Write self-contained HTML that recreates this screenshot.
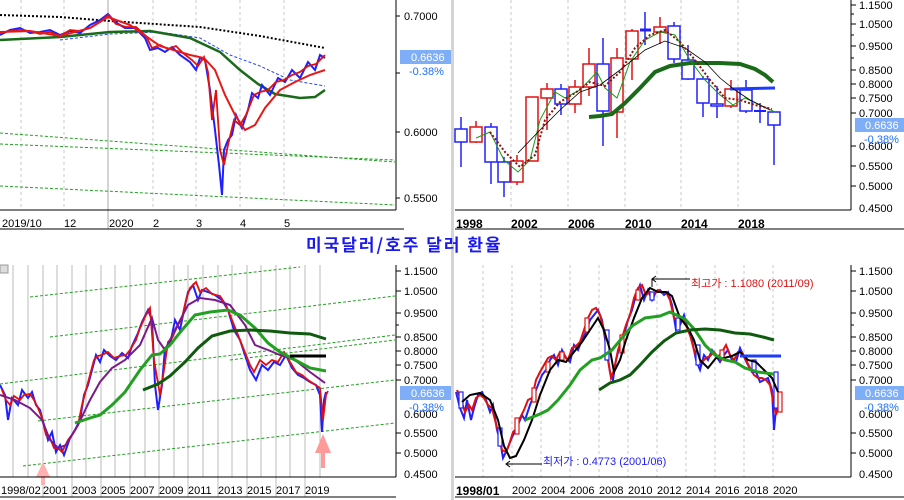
<!DOCTYPE html>
<html><head><meta charset="utf-8"><style>
html,body{margin:0;padding:0;background:#fff;}
svg{display:block;font-family:"Liberation Sans","Noto Sans CJK KR",sans-serif;}
.ax{font-size:11px;fill:#000;}
.xl{font-size:11px;fill:#000;}
.b{font-weight:bold;font-size:12px;}
</style></head><body>
<svg width="904" height="500" viewBox="0 0 904 500" xmlns="http://www.w3.org/2000/svg">
<rect width="904" height="500" fill="#fff"/>
<rect x="451" y="0" width="3" height="500" fill="#d4d4d4"/>

<!-- ===== TOP LEFT ===== -->
<g stroke="#c8c8c8" stroke-dasharray="3,3">
<line x1="21" y1="0" x2="21" y2="210"/><line x1="64" y1="0" x2="64" y2="210"/>
<line x1="153" y1="0" x2="153" y2="210"/><line x1="196" y1="0" x2="196" y2="210"/>
<line x1="240" y1="0" x2="240" y2="210"/><line x1="284" y1="0" x2="284" y2="210"/>
</g>
<line x1="108" y1="0" x2="108" y2="229" stroke="#aaa"/>
<g stroke="#22a022" stroke-dasharray="3,2" fill="none">
<line x1="0" y1="133" x2="395" y2="162"/><line x1="0" y1="144" x2="395" y2="160"/><line x1="0" y1="186" x2="395" y2="205"/>
</g>
<polyline fill="none" stroke="#000" stroke-width="2" stroke-dasharray="2,2" points="0,15 60,17 110,21 200,27 260,36 325,48"/>
<polyline fill="none" stroke="#2244ff" stroke-width="1" stroke-dasharray="3,2" points="60,40 110,34 160,32 200,38 230,55 260,66 290,80 325,86"/>
<polyline fill="none" stroke="#1a6a1a" stroke-width="2.5" points="0,40 60,37 110,32 150,31 190,38 220,52 240,70 258,84 275,94 300,98 315,97 325,90"/>
<polyline fill="none" stroke="#2020ff" stroke-width="2" points="0,35 10,30 20,28 30,33 40,32 50,30 60,35 70,31 80,33 90,25 100,20 108,14 115,22 125,28 135,28 145,38 150,50 158,48 165,52 172,47 180,55 190,62 196,70 200,58 205,60 210,90 215,130 219,165 222,195 224,150 228,140 232,135 236,115 242,128 248,110 252,93 258,98 262,85 270,95 278,78 285,82 292,70 300,78 308,62 315,70 320,55 325,58"/>
<polyline fill="none" stroke="#e01010" stroke-width="1.8" points="0,33 10,31 20,30 30,31 40,34 50,32 60,36 70,30 80,31 90,28 100,22 108,15 116,24 126,27 136,27 146,36 152,48 160,45 168,49 176,46 184,54 192,60 198,66 204,57 208,72 212,120 216,90 220,150 224,165 228,145 234,120 240,125 246,115 254,95 260,92 268,90 276,82 284,80 292,75 300,72 308,66 316,64 325,55"/>
<polyline fill="none" stroke="#e81818" stroke-width="2" points="0,32 30,31 60,36 90,28 108,17 130,25 160,46 190,55 204,58 215,70 225,95 235,115 245,130 255,125 265,108 280,90 295,82 310,75 325,70"/>
<line x1="396" y1="0" x2="396" y2="210" stroke="#000"/>
<line x1="0" y1="210" x2="396" y2="210" stroke="#000"/>
<line x1="0" y1="229" x2="404" y2="229" stroke="#000"/>
<g stroke="#000"><line x1="396" y1="16" x2="400" y2="16"/><line x1="396" y1="73" x2="400" y2="73"/><line x1="396" y1="132" x2="400" y2="132"/><line x1="396" y1="198" x2="400" y2="198"/></g>
<text class="ax" x="404" y="20">0.7000</text>
<text class="ax" x="404" y="136">0.6000</text>
<text class="ax" x="404" y="202">0.5500</text>
<rect x="400" y="50" width="51" height="14" fill="#7eaef8"/>
<text x="411" y="61" font-size="11" fill="#fff">0.6636</text>
<text x="409" y="75" font-size="11" fill="#1f6fff">-0.38%</text>
<text class="xl" x="2" y="227">2019/10</text>
<text class="xl" x="64" y="227">12</text>
<text class="xl" x="109" y="227">2020</text>
<text class="xl" x="153" y="227">2</text>
<text class="xl" x="196" y="227">3</text>
<text class="xl" x="240" y="227">4</text>
<text class="xl" x="284" y="227">5</text>

<!-- ===== TOP RIGHT ===== -->
<g stroke="#c8c8c8" stroke-dasharray="3,3">
<line x1="511" y1="0" x2="511" y2="210"/><line x1="568" y1="0" x2="568" y2="210"/>
<line x1="625" y1="0" x2="625" y2="210"/><line x1="681" y1="0" x2="681" y2="210"/><line x1="738" y1="0" x2="738" y2="210"/>
</g>
<g stroke-width="1.5" fill="none">
<g stroke="#2020ff"><line x1="461" y1="117" x2="461" y2="167"/><rect x="455" y="129" width="12" height="13" fill="#fff"/></g>
<g stroke="#e01010"><line x1="476" y1="121" x2="476" y2="143"/><rect x="470" y="127" width="12" height="15" fill="#fff"/></g>
<g stroke="#2020ff"><line x1="491" y1="123" x2="491" y2="184"/><rect x="485" y="127" width="12" height="35" fill="#fff"/></g>
<g stroke="#2020ff"><line x1="504" y1="157" x2="504" y2="197"/><rect x="498" y="162" width="12" height="20" fill="#fff"/></g>
<g stroke="#e01010"><line x1="517" y1="155" x2="517" y2="185"/><rect x="511" y="161" width="12" height="21" fill="#fff"/></g>
<g stroke="#e01010"><rect x="526" y="97" width="12" height="64" fill="#fff"/></g>
<g stroke="#e01010"><line x1="547" y1="83" x2="547" y2="130"/><rect x="541" y="89" width="12" height="9" fill="#fff"/></g>
<g stroke="#2020ff"><line x1="561" y1="84" x2="561" y2="115"/><rect x="555" y="89" width="12" height="15" fill="#fff"/></g>
<g stroke="#e01010"><line x1="575" y1="80" x2="575" y2="113"/><rect x="569" y="87" width="12" height="17" fill="#fff"/></g>
<g stroke="#e01010"><line x1="589" y1="48" x2="589" y2="96"/><rect x="583" y="64" width="12" height="23" fill="#fff"/></g>
<g stroke="#2020ff"><line x1="603" y1="38" x2="603" y2="146"/><rect x="597" y="64" width="12" height="47" fill="#fff"/></g>
<g stroke="#e01010"><line x1="617" y1="48" x2="617" y2="138"/><rect x="611" y="58" width="12" height="54" fill="#fff"/></g>
<g stroke="#e01010"><line x1="632" y1="29" x2="632" y2="80"/><rect x="626" y="31" width="12" height="28" fill="#fff"/></g>
<g stroke="#2020ff"><line x1="645" y1="12" x2="645" y2="45"/><line x1="640" y1="30" x2="651" y2="30" stroke-width="3"/></g>
<g stroke="#e01010"><line x1="660" y1="17" x2="660" y2="44"/><rect x="654" y="27" width="12" height="5" fill="#fff"/></g>
<g stroke="#2020ff"><line x1="674" y1="22" x2="674" y2="63"/><rect x="668" y="26" width="12" height="33" fill="#fff"/></g>
<g stroke="#2020ff"><line x1="688" y1="45" x2="688" y2="80"/><rect x="682" y="60" width="12" height="19" fill="#fff"/></g>
<g stroke="#2020ff"><line x1="703" y1="76" x2="703" y2="117"/><rect x="697" y="79" width="12" height="24" fill="#fff"/></g>
<g stroke="#2020ff"><line x1="717" y1="86" x2="717" y2="118"/><rect x="711" y="104" width="12" height="2" fill="#fff"/></g>
<g stroke="#e01010"><line x1="731" y1="80" x2="731" y2="108"/><rect x="725" y="89" width="12" height="17" fill="#fff"/></g>
<g stroke="#2020ff"><line x1="746" y1="80" x2="746" y2="113"/><rect x="740" y="90" width="12" height="21" fill="#fff"/></g>
<g stroke="#2020ff"><line x1="760" y1="103" x2="760" y2="123"/><line x1="754" y1="111" x2="766" y2="111" stroke-width="2"/></g>
<g stroke="#2020ff"><line x1="774" y1="112" x2="774" y2="165"/><rect x="768" y="112" width="12" height="13" fill="#fff"/></g>
</g>
<polyline fill="none" stroke="#1a6a1a" stroke-width="4" points="589,117 600,116 612,114 625,103 640,88 655,72 670,66 690,63 720,63 740,64 755,69 765,75 773,82"/>
<line x1="730" y1="89" x2="775" y2="88" stroke="#1e3cff" stroke-width="3"/>
<polyline fill="none" stroke="#1a9a1a" stroke-width="1" points="476,138 490,132 504,160 518,172 530,160 540,120 555,92 565,98 580,90 597,72 605,88 617,98 630,62 645,40 660,32 675,35 690,60 705,80 720,95 733,105 745,98 760,105 775,112"/>
<polyline fill="none" stroke="#000" stroke-width="0.8" points="518,153 540,130 560,110 580,92 600,85 620,70 645,50 665,41 685,48 705,62 720,78 735,90 750,100 770,110"/>
<polyline fill="none" stroke="#8a1010" stroke-width="2" stroke-dasharray="2,2" points="490,132 505,152 520,167 535,155 545,120 560,102 575,93 590,82 605,86 620,72 635,48 650,35 665,30 680,42 695,60 710,80 725,98 740,100 755,105 772,109"/>
<line x1="851" y1="0" x2="851" y2="210" stroke="#000"/>
<line x1="455" y1="210" x2="851" y2="210" stroke="#000"/>
<line x1="455" y1="229" x2="904" y2="229" stroke="#000"/>
<g stroke="#000">
<line x1="851" y1="5" x2="856" y2="5"/><line x1="851" y1="14" x2="854" y2="14"/><line x1="851" y1="24" x2="856" y2="24"/><line x1="851" y1="35" x2="854" y2="35"/><line x1="851" y1="46" x2="856" y2="46"/><line x1="851" y1="58" x2="854" y2="58"/><line x1="851" y1="70" x2="856" y2="70"/><line x1="851" y1="84" x2="856" y2="84"/><line x1="851" y1="98" x2="856" y2="98"/><line x1="851" y1="113" x2="856" y2="113"/><line x1="851" y1="146" x2="856" y2="146"/><line x1="851" y1="166" x2="856" y2="166"/><line x1="851" y1="186" x2="856" y2="186"/>
</g>
<text class="ax" x="859" y="9">1.1500</text>
<text class="ax" x="859" y="28">1.0500</text>
<text class="ax" x="859" y="50">0.9500</text>
<text class="ax" x="859" y="74">0.8500</text>
<text class="ax" x="859" y="88">0.8000</text>
<text class="ax" x="859" y="102">0.7500</text>
<text class="ax" x="859" y="117">0.7000</text>
<text class="ax" x="859" y="150">0.6000</text>
<text class="ax" x="859" y="170">0.5500</text>
<text class="ax" x="859" y="190">0.5000</text>
<text class="ax" x="859" y="212">0.4500</text>
<rect x="855" y="118" width="49" height="14" fill="#7eaef8"/>
<text x="865" y="129" font-size="11" fill="#fff">0.6636</text>
<text x="864" y="143" font-size="11" fill="#1f6fff">-0.38%</text>
<text class="xl b" x="456" y="228">1998</text>
<text class="xl b" x="511" y="228">2002</text>
<text class="xl b" x="568" y="228">2006</text>
<text class="xl b" x="625" y="228">2010</text>
<text class="xl b" x="681" y="228">2014</text>
<text class="xl b" x="738" y="228">2018</text>

<!-- Title -->
<text x="306" y="251" font-size="17" font-weight="bold" fill="#1a1aee" letter-spacing="2" font-family="'Noto Sans CJK KR','NanumGothic',sans-serif">미국달러/호주 달러 환율</text>

<!-- ===== BOTTOM LEFT ===== -->
<rect x="0" y="265" width="8" height="8" fill="#ddd" stroke="#999"/>
<g stroke="#bbb">
<line x1="13" y1="265" x2="13" y2="477"/><line x1="28" y1="265" x2="28" y2="477"/><line x1="43" y1="265" x2="43" y2="497"/><line x1="57" y1="265" x2="57" y2="477"/><line x1="72" y1="265" x2="72" y2="497"/><line x1="86" y1="265" x2="86" y2="477"/><line x1="101" y1="265" x2="101" y2="497"/><line x1="115" y1="265" x2="115" y2="477"/><line x1="130" y1="265" x2="130" y2="497"/><line x1="145" y1="265" x2="145" y2="477"/><line x1="159" y1="265" x2="159" y2="497"/><line x1="174" y1="265" x2="174" y2="477"/><line x1="188" y1="265" x2="188" y2="497"/><line x1="203" y1="265" x2="203" y2="477"/><line x1="218" y1="265" x2="218" y2="497"/><line x1="232" y1="265" x2="232" y2="477"/><line x1="247" y1="265" x2="247" y2="497"/><line x1="261" y1="265" x2="261" y2="477"/><line x1="276" y1="265" x2="276" y2="497"/><line x1="290" y1="265" x2="290" y2="477"/><line x1="305" y1="265" x2="305" y2="497"/><line x1="320" y1="265" x2="320" y2="477"/>
</g>
<g stroke="#22a022" stroke-dasharray="3,2" fill="none">
<line x1="30" y1="297" x2="300" y2="267"/>
<line x1="50" y1="337" x2="395" y2="296"/>
<line x1="0" y1="384" x2="395" y2="335"/>
<line x1="38" y1="421" x2="395" y2="380"/>
<line x1="23" y1="466" x2="395" y2="423"/>
<line x1="230" y1="360" x2="395" y2="340"/>
</g>
<polyline fill="none" stroke="#2020ff" stroke-width="2" points="0,385 5,395 8,420 12,398 18,405 22,390 28,398 32,392 36,405 40,410 44,425 48,440 52,432 56,452 60,445 64,455 70,438 75,430 80,420 84,395 88,385 92,370 96,355 100,362 104,350 110,356 116,360 122,353 128,358 132,346 138,333 142,322 148,310 152,320 155,385 158,410 162,385 165,348 170,345 175,320 180,330 184,310 188,292 193,285 198,300 202,290 208,292 215,295 222,300 228,310 234,330 240,340 246,358 250,370 256,380 262,365 268,370 274,362 280,365 286,355 292,368 298,375 304,378 310,382 316,385 320,395 322,432 324,400 326,392"/>
<polyline fill="none" stroke="#e01010" stroke-width="1.8" points="2,390 6,400 10,405 14,396 20,400 24,395 30,394 34,400 38,408 42,418 46,435 50,438 54,448 58,448 62,452 68,440 74,432 78,425 82,405 86,390 90,375 94,360 98,356 102,355 108,352 114,358 120,356 126,355 130,350 136,340 140,328 146,315 150,308 154,360 160,395 164,370 168,342 172,338 178,325 182,318 186,300 190,288 196,282 200,292 206,288 212,294 220,296 226,305 232,320 238,335 244,350 250,365 254,372 260,360 266,365 272,360 278,362 284,352 290,362 296,372 302,375 308,380 314,384 320,388 323,420 326,395 328,391"/>
<polyline fill="none" stroke="#7a1a8a" stroke-width="2" points="0,395 15,400 30,408 42,420 50,440 58,448 66,445 78,425 90,400 100,382 112,368 125,360 140,345 152,318 158,340 165,350 175,330 188,305 200,298 215,300 230,305 245,325 255,345 268,350 280,355 295,360 310,372 325,383"/>
<polyline fill="none" stroke="#22a022" stroke-width="3" points="75,423 90,418 100,415 112,405 125,392 140,370 152,355 160,354 170,345 182,330 195,315 210,312 228,310 240,315 255,328 268,343 280,352 295,360 310,368 326,371"/>
<polyline fill="none" stroke="#0e5a0e" stroke-width="3" points="143,390 158,384 170,376 185,362 198,348 212,336 230,331 250,330 270,331 290,333 310,334 326,339"/>
<line x1="290" y1="356" x2="326" y2="356" stroke="#000" stroke-width="3"/>
<polygon points="43,462 36,477 50,477" fill="#ffb0b0"/>
<rect x="41" y="477" width="4" height="8" fill="#ffb0b0"/>
<polygon points="323,434 315,453 331,453" fill="#ff9a9a"/>
<rect x="321" y="453" width="4" height="15" fill="#ff9a9a"/>
<line x1="396" y1="265" x2="396" y2="477" stroke="#000"/>
<line x1="0" y1="477" x2="396" y2="477" stroke="#000"/>
<line x1="0" y1="497" x2="396" y2="497" stroke="#000"/>
<g stroke="#000">
<line x1="396" y1="271" x2="401" y2="271"/><line x1="396" y1="291" x2="401" y2="291"/><line x1="396" y1="313" x2="401" y2="313"/><line x1="396" y1="325" x2="399" y2="325"/><line x1="396" y1="337" x2="401" y2="337"/><line x1="396" y1="351" x2="401" y2="351"/><line x1="396" y1="365" x2="401" y2="365"/><line x1="396" y1="380" x2="401" y2="380"/><line x1="396" y1="433" x2="401" y2="433"/><line x1="396" y1="453" x2="401" y2="453"/>
</g>
<text class="ax" x="404" y="275">1.1500</text>
<text class="ax" x="404" y="295">1.0500</text>
<text class="ax" x="404" y="317">0.9500</text>
<text class="ax" x="404" y="341">0.8500</text>
<text class="ax" x="404" y="355">0.8000</text>
<text class="ax" x="404" y="369">0.7500</text>
<text class="ax" x="404" y="384">0.7000</text>
<text class="ax" x="404" y="418">0.6000</text>
<text class="ax" x="404" y="437">0.5500</text>
<text class="ax" x="404" y="457">0.5000</text>
<text class="ax" x="404" y="478">0.4500</text>
<rect x="400" y="386" width="51" height="14" fill="#7eaef8"/>
<text x="411" y="397" font-size="11" fill="#fff">0.6636</text>
<text x="409" y="411" font-size="11" fill="#1f6fff">-0.38%</text>
<text class="xl" x="1" y="494">1998/02</text>
<text class="xl" x="43" y="494">2001</text>
<text class="xl" x="72" y="494">2003</text>
<text class="xl" x="101" y="494">2005</text>
<text class="xl" x="130" y="494">2007</text>
<text class="xl" x="159" y="494">2009</text>
<text class="xl" x="188" y="494">2011</text>
<text class="xl" x="218" y="494">2013</text>
<text class="xl" x="247" y="494">2015</text>
<text class="xl" x="276" y="494">2017</text>
<text class="xl" x="305" y="494">2019</text>

<!-- ===== BOTTOM RIGHT ===== -->
<g stroke="#c8c8c8" stroke-dasharray="3,3">
<line x1="483" y1="265" x2="483" y2="477"/><line x1="512" y1="265" x2="512" y2="477"/><line x1="541" y1="265" x2="541" y2="477"/><line x1="570" y1="265" x2="570" y2="477"/><line x1="599" y1="265" x2="599" y2="477"/><line x1="628" y1="265" x2="628" y2="477"/><line x1="657" y1="265" x2="657" y2="477"/><line x1="686" y1="265" x2="686" y2="477"/><line x1="715" y1="265" x2="715" y2="477"/><line x1="744" y1="265" x2="744" y2="477"/><line x1="773" y1="265" x2="773" y2="477"/>
</g>
<polyline fill="none" stroke="#2020ff" stroke-width="2" points="456,392 460,408 464,418 467,400 471,420 474,408 478,395 482,392 486,400 490,412 493,405 497,430 500,440 503,458 507,450 510,442 514,433 518,425 522,415 525,420 530,405 534,395 538,385 542,375 546,370 550,360 554,355 558,365 562,350 566,358 570,362 574,345 578,350 582,340 586,332 590,320 594,315 598,310 602,320 606,345 610,372 613,380 616,360 620,345 624,335 628,320 632,310 636,295 640,285 644,300 648,290 652,300 656,292 660,290 664,295 668,292 672,305 676,330 680,325 684,315 688,330 692,340 696,360 700,370 704,355 708,360 712,350 716,356 720,362 724,355 728,350 732,360 736,362 740,348 744,357 748,365 752,372 756,372 760,382 764,380 768,378 772,390 774,430 777,398 780,395"/>
<polyline fill="none" stroke="#e01010" stroke-width="2" points="457,390 461,400 465,412 469,405 472,410 476,398 480,395 484,398 488,405 492,408 495,420 499,435 502,450 506,452 509,445 513,432 517,428 520,418 524,410 528,400 532,398 536,380 540,372 544,365 548,358 552,356 556,360 560,352 564,355 568,360 572,348 576,346 580,342 584,330 588,318 592,310 596,308 600,315 604,330 608,360 611,378 614,370 618,350 622,338 626,325 630,315 634,298 638,288 642,285 646,295 650,292 654,295 658,290 662,293 666,292 670,300 674,318 678,322 682,318 686,325 690,335 694,350 698,362 702,362 706,358 710,356 714,352 718,357 722,352 726,345 730,355 734,360 738,352 742,352 746,360 750,368 754,375 758,378 762,378 766,380 770,385 776,415 779,405 781,410"/>
<g stroke-width="1.2" fill="#fff">
<rect x="459" y="392" width="4" height="16" stroke="#2020ff"/><rect x="498" y="428" width="4" height="18" stroke="#2020ff"/><rect x="515" y="418" width="4" height="16" stroke="#e01010"/><rect x="532" y="388" width="4" height="14" stroke="#e01010"/><rect x="546" y="362" width="4" height="10" stroke="#e01010"/><rect x="560" y="352" width="4" height="8" stroke="#e01010"/><rect x="585" y="318" width="4" height="14" stroke="#e01010"/><rect x="605" y="330" width="4" height="30" stroke="#2020ff"/><rect x="620" y="335" width="4" height="18" stroke="#e01010"/><rect x="636" y="290" width="4" height="10" stroke="#e01010"/><rect x="650" y="292" width="4" height="8" stroke="#2020ff"/><rect x="676" y="318" width="4" height="12" stroke="#2020ff"/><rect x="696" y="345" width="4" height="20" stroke="#2020ff"/><rect x="720" y="350" width="4" height="10" stroke="#e01010"/><rect x="752" y="360" width="4" height="12" stroke="#2020ff"/><rect x="774" y="372" width="4" height="36" stroke="#2020ff"/><rect x="778" y="392" width="4" height="20" stroke="#e01010"/>
</g>
<polyline fill="none" stroke="#000" stroke-width="2" points="462,402 470,395 480,393 490,400 498,420 504,446 510,458 516,456 524,440 532,420 540,395 550,370 558,360 566,362 574,352 582,342 590,330 598,318 604,330 610,350 614,372 620,360 626,340 634,318 642,298 650,288 658,292 666,292 672,296 680,318 688,328 694,340 700,360 708,368 716,358 724,358 732,356 740,352 748,360 756,362 764,370 772,378 778,392"/>
<polyline fill="none" stroke="#22a022" stroke-width="3" points="525,420 540,414 548,410 558,400 570,385 580,370 592,360 600,358 612,350 622,338 632,326 645,318 660,316 670,312 685,319 695,330 705,345 715,355 725,360 735,362 745,368 758,372 773,374"/>
<polyline fill="none" stroke="#0e5a0e" stroke-width="3" points="599,390 610,383 620,380 630,375 640,365 652,352 664,341 676,333 690,330 705,329 720,330 735,333 750,334 763,337 774,340"/>
<line x1="740" y1="356" x2="781" y2="356" stroke="#1e3cff" stroke-width="3"/>
<line x1="652" y1="279" x2="690" y2="279" stroke="#000"/>
<polyline points="656,276 652,279 656,282" fill="none" stroke="#000"/>
<line x1="652" y1="279" x2="652" y2="287" stroke="#000"/>
<text x="691" y="287" font-size="11" fill="#e01010">최고가 : 1.1080 (2011/09)</text>
<line x1="506" y1="464" x2="542" y2="464" stroke="#000"/>
<polyline points="510,461 506,464 510,467" fill="none" stroke="#000"/>
<text x="543" y="465" font-size="11" fill="#2020ff">최저가 : 0.4773 (2001/06)</text>
<line x1="851" y1="265" x2="851" y2="477" stroke="#000"/>
<line x1="455" y1="477" x2="851" y2="477" stroke="#000"/>
<line x1="455" y1="497" x2="904" y2="497" stroke="#000"/>
<g stroke="#000">
<line x1="851" y1="271" x2="856" y2="271"/><line x1="851" y1="291" x2="856" y2="291"/><line x1="851" y1="313" x2="856" y2="313"/><line x1="851" y1="325" x2="854" y2="325"/><line x1="851" y1="337" x2="856" y2="337"/><line x1="851" y1="351" x2="856" y2="351"/><line x1="851" y1="365" x2="856" y2="365"/><line x1="851" y1="380" x2="856" y2="380"/><line x1="851" y1="433" x2="856" y2="433"/><line x1="851" y1="453" x2="856" y2="453"/>
</g>
<text class="ax" x="859" y="275">1.1500</text>
<text class="ax" x="859" y="295">1.0500</text>
<text class="ax" x="859" y="317">0.9500</text>
<text class="ax" x="859" y="341">0.8500</text>
<text class="ax" x="859" y="355">0.8000</text>
<text class="ax" x="859" y="369">0.7500</text>
<text class="ax" x="859" y="384">0.7000</text>
<text class="ax" x="859" y="418">0.6000</text>
<text class="ax" x="859" y="437">0.5500</text>
<text class="ax" x="859" y="457">0.5000</text>
<text class="ax" x="859" y="478">0.4500</text>
<rect x="855" y="386" width="49" height="14" fill="#7eaef8"/>
<text x="865" y="397" font-size="11" fill="#fff">0.6636</text>
<text x="864" y="411" font-size="11" fill="#1f6fff">-0.38%</text>
<text class="xl b" x="456" y="495">1998/01</text>
<text class="xl" x="512" y="494">2002</text>
<text class="xl" x="541" y="494">2004</text>
<text class="xl" x="570" y="494">2006</text>
<text class="xl" x="599" y="494">2008</text>
<text class="xl" x="628" y="494">2010</text>
<text class="xl" x="657" y="494">2012</text>
<text class="xl" x="686" y="494">2014</text>
<text class="xl" x="715" y="494">2016</text>
<text class="xl" x="744" y="494">2018</text>
<text class="xl" x="773" y="494">2020</text>
</svg>
</body></html>
